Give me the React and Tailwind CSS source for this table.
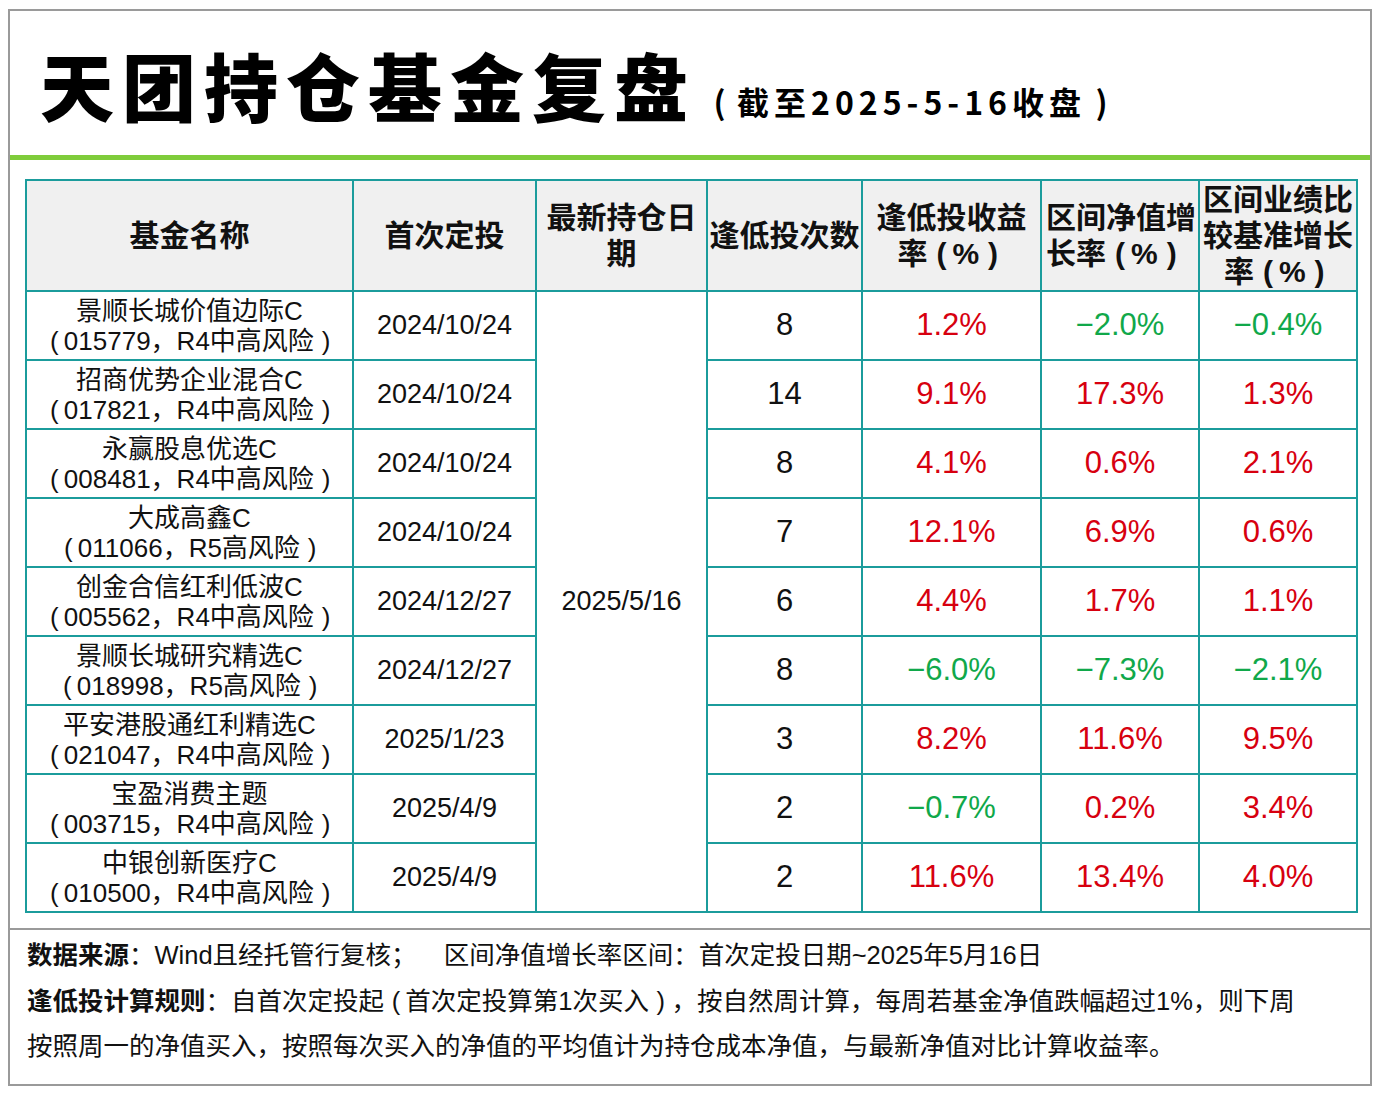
const RED = "text-[#d7000f]";
const GREEN = "text-[#10a84a]";
const CJK = { fontFamily: '"Noto Sans CJK SC", sans-serif' };

const rows = [
  { name: "景顺长城价值边际C", code: "015779，R4中高风险", start: "2024/10/24", times: "8", a: "1.2%", b: "−2.0%", c: "−0.4%" },
  { name: "招商优势企业混合C", code: "017821，R4中高风险", start: "2024/10/24", times: "14", a: "9.1%", b: "17.3%", c: "1.3%" },
  { name: "永赢股息优选C", code: "008481，R4中高风险", start: "2024/10/24", times: "8", a: "4.1%", b: "0.6%", c: "2.1%" },
  { name: "大成高鑫C", code: "011066，R5高风险", start: "2024/10/24", times: "7", a: "12.1%", b: "6.9%", c: "0.6%" },
  { name: "创金合信红利低波C", code: "005562，R4中高风险", start: "2024/12/27", times: "6", a: "4.4%", b: "1.7%", c: "1.1%" },
  { name: "景顺长城研究精选C", code: "018998，R5高风险", start: "2024/12/27", times: "8", a: "−6.0%", b: "−7.3%", c: "−2.1%" },
  { name: "平安港股通红利精选C", code: "021047，R4中高风险", start: "2025/1/23", times: "3", a: "8.2%", b: "11.6%", c: "9.5%" },
  { name: "宝盈消费主题", code: "003715，R4中高风险", start: "2025/4/9", times: "2", a: "−0.7%", b: "0.2%", c: "3.4%" },
  { name: "中银创新医疗C", code: "010500，R4中高风险", start: "2025/4/9", times: "2", a: "11.6%", b: "13.4%", c: "4.0%" },
];

const tone = (v) => (v.startsWith("−") ? GREEN : RED);

const cell = "border-2 border-[#1b9c9c] text-center align-middle p-0";

// full-width looking brackets: narrow glyph padded out to about one em
const Wrapped = ({ children }) => (
  <>
    <span className="pl-[0.3em] pr-[0.2em]">(</span>
    {children}
    <span className="pl-[0.3em] pr-[0.25em]">)</span>
  </>
);

export default function App() {
  return (
    <div
      className="w-[1380px] h-[1094px] bg-white pt-[9px] pl-[8px]"
      style={{ fontFamily: '"Liberation Sans", "Noto Sans CJK SC", sans-serif' }}
    >
      <div className="w-[1364px] h-[1077px] border-2 border-[#9a9a9a] flex flex-col">
        {/* Title */}
        <div className="h-[144px] flex items-end pl-[30px] pb-[34px] text-black">
          <span className="text-[74px] leading-none font-black tracking-[8px]" style={CJK}>
            天团持仓基金复盘
          </span>
          <span className="text-[32px] leading-none font-bold tracking-[5px] ml-[8px] mb-[4px]" style={CJK}>
            <Wrapped>截至2025-5-16收盘</Wrapped>
          </span>
        </div>
        <div className="h-[5px] bg-[#7fcc3b]" />

        {/* Table */}
        <div className="pl-[15px] pt-[19px]">
          <table className="border-collapse table-fixed w-[1331px] text-[#111]">
            <colgroup>
              <col className="w-[327px]" />
              <col className="w-[183px]" />
              <col className="w-[171px]" />
              <col className="w-[155px]" />
              <col className="w-[179px]" />
              <col className="w-[158px]" />
              <col className="w-[158px]" />
            </colgroup>
            <thead>
              <tr className="h-[111px] bg-[#f0f0f0] text-[30px] font-bold leading-[36px]">
                <th className={cell}>基金名称</th>
                <th className={cell}>首次定投</th>
                <th className={cell}>最新持仓日<br />期</th>
                <th className={cell}>逢低投次数</th>
                <th className={cell}>逢低投收益<br />率<Wrapped>%</Wrapped></th>
                <th className={`${cell} text-left pl-[4px] whitespace-nowrap`}>区间净值增<br />长率<Wrapped>%</Wrapped></th>
                <th className={cell}>区间业绩比<br />较基准增长<br />率<Wrapped>%</Wrapped></th>
              </tr>
            </thead>
            <tbody>
              {rows.map((r, i) => (
                <tr key={r.code} className="h-[69px]">
                  <td className={`${cell} text-[26px] leading-[30px] whitespace-nowrap`}>
                    {r.name}
                    <br />
                    <Wrapped>{r.code}</Wrapped>
                  </td>
                  <td className={`${cell} text-[27px]`}>{r.start}</td>
                  {i === 0 && (
                    <td rowSpan={rows.length} className={`${cell} text-[27px]`}>
                      2025/5/16
                    </td>
                  )}
                  <td className={`${cell} text-[31px]`}>{r.times}</td>
                  <td className={`${cell} text-[31px] ${tone(r.a)}`}>{r.a}</td>
                  <td className={`${cell} text-[31px] ${tone(r.b)}`}>{r.b}</td>
                  <td className={`${cell} text-[31px] ${tone(r.c)}`}>{r.c}</td>
                </tr>
              ))}
            </tbody>
          </table>
        </div>

        {/* Notes */}
        <div className="mt-[15px] border-t-2 border-[#9a9a9a] pt-[3px] pl-[17px] text-[25.5px] leading-[45.5px] text-[#111] whitespace-nowrap">
          <p>
            <span className="font-bold">数据来源</span>：Wind且经托管行复核；
            <span className="ml-[27px]">区间净值增长率区间：首次定投日期~2025年5月16日</span>
          </p>
          <p>
            <span className="font-bold">逢低投计算规则</span>：自首次定投起<Wrapped>首次定投算第1次买入</Wrapped>，按自然周计算，每周若基金净值跌幅超过1%，则下周
          </p>
          <p>按照周一的净值买入，按照每次买入的净值的平均值计为持仓成本净值，与最新净值对比计算收益率。</p>
        </div>
      </div>
    </div>
  );
}
